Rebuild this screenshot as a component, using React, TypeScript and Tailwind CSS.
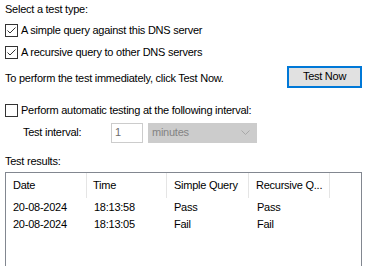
import React from "react";

function Check({ checked }: { checked: boolean }) {
  return (
    <div className="w-[13px] h-[13px] border border-[#333333] bg-white flex items-center justify-center shrink-0">
      {checked && (
        <svg width="11" height="11" viewBox="0 0 11 11">
          <path d="M1.5 5.5 L4 8 L9.5 2.5" fill="none" stroke="#333333" strokeWidth="1" />
        </svg>
      )}
    </div>
  );
}

export default function App() {
  const rows = [
    ["20-08-2024", "18:13:58", "Pass", "Pass"],
    ["20-08-2024", "18:13:05", "Fail", "Fail"],
  ];
  return (
    <div className="w-[371px] h-[266px] bg-white overflow-hidden text-[11px] tracking-[-0.25px] text-black font-['Liberation_Sans',Arial,sans-serif] pl-[5px] pr-[9px]">
      <div className="h-[19px] flex items-center">Select a test type:</div>
      <div className="h-[22px] flex items-center gap-[3px]">
        <Check checked />
        <span>A simple query against this DNS server</span>
      </div>
      <div className="h-[22px] flex items-center gap-[3px]">
        <Check checked />
        <span>A recursive query to other DNS servers</span>
      </div>
      <div className="h-[25px] mt-[1px] flex items-center justify-between">
        <span className="pt-[3px]">To perform the test immediately, click Test Now.</span>
        <button className="w-[75px] h-[22px] bg-[#e1e1e1] border-2 border-[#0078d7] flex items-center justify-center">
          Test Now
        </button>
      </div>
      <div className="h-[22px] mt-[10px] flex items-center gap-[3px]">
        <Check checked={false} />
        <span>Perform automatic testing at the following interval:</span>
      </div>
      <div className="h-[21px] mt-[1px] flex items-center">
        <span className="pl-[18px] w-[106px]">Test interval:</span>
        <div className="w-[32px] h-[20px] border border-[#cccccc] flex items-center pl-[3px] text-[#6d6d6d]">1</div>
        <div className="ml-[5px] w-[109px] h-[20px] bg-[#cccccc] border border-[#cccccc] flex items-center justify-between pl-[3px] pr-[6px] text-[#838383]">
          <span>minutes</span>
          <svg width="9" height="6" viewBox="0 0 9 6">
            <path d="M0.5 0.5 L4.5 4.5 L8.5 0.5" fill="none" stroke="#a8a8a8" strokeWidth="1" />
          </svg>
        </div>
      </div>
      <div className="h-[18px] mt-[9px] flex items-center">Test results:</div>
      <div className="mt-[2px] h-[100px] border border-[#828790] w-[357px]">
        <div className="flex h-[25px]">
          <div className="w-[81px] pl-[7px] flex items-center border-r border-[#e5e5e5]">Date</div>
          <div className="w-[80px] pl-[6px] flex items-center border-r border-[#e5e5e5]">Time</div>
          <div className="w-[82px] pl-[7px] flex items-center border-r border-[#e5e5e5]">Simple Query</div>
          <div className="w-[81px] pl-[7px] flex items-center border-r border-[#e5e5e5]">Recursive Q...</div>
        </div>
        {rows.map((r, i) => (
          <div key={i} className="flex h-[16px] items-center mt-[1px]">
            <div className="w-[81px] pl-[7px]">{r[0]}</div>
            <div className="w-[80px] pl-[7px]">{r[1]}</div>
            <div className="w-[82px] pl-[7px]">{r[2]}</div>
            <div className="w-[81px] pl-[8px]">{r[3]}</div>
          </div>
        ))}
      </div>
    </div>
  );
}
